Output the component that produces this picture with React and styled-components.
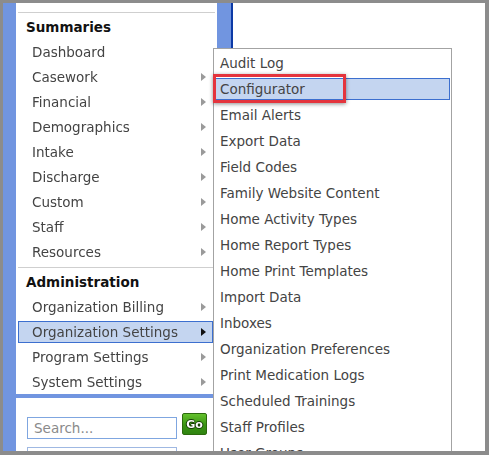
import React from 'react'
import styled, { createGlobalStyle } from 'styled-components'

const GlobalStyle = createGlobalStyle`
  html, body { margin: 0; padding: 0; background: #fff; }
  body { font-family: "DejaVu Sans", Verdana, sans-serif; }
`

const summaries = [
  { label: 'Dashboard' },
  { label: 'Casework', sub: true },
  { label: 'Financial', sub: true },
  { label: 'Demographics', sub: true },
  { label: 'Intake', sub: true },
  { label: 'Discharge', sub: true },
  { label: 'Custom', sub: true },
  { label: 'Staff', sub: true },
  { label: 'Resources', sub: true },
]

const administration = [
  { label: 'Organization Billing', sub: true },
  { label: 'Organization Settings', sub: true, active: true },
  { label: 'Program Settings', sub: true },
  { label: 'System Settings', sub: true },
]

const settings = [
  'Audit Log', 'Configurator', 'Email Alerts', 'Export Data', 'Field Codes',
  'Family Website Content', 'Home Activity Types', 'Home Report Types',
  'Home Print Templates', 'Import Data', 'Inboxes', 'Organization Preferences',
  'Print Medication Logs', 'Scheduled Trainings', 'Staff Profiles', 'User Groups',
]

export default function App() {
  return (
    <>
      <GlobalStyle />
      <Frame>
        <Sidebar>
          <MenuPanel>
            <Separator />
            <Heading>Summaries</Heading>
            {summaries.map((item) => (
              <MenuItem key={item.label} $active={item.active}>
                {item.label}
                {item.sub && <Arrow $active={item.active} />}
              </MenuItem>
            ))}
            <Separator $spaced />
            <Heading>Administration</Heading>
            {administration.map((item) => (
              <MenuItem key={item.label} $active={item.active}>
                {item.label}
                {item.sub && <Arrow $active={item.active} />}
              </MenuItem>
            ))}
          </MenuPanel>
          <SearchPanel>
            <SearchRow>
              <SearchInput placeholder="Search..." autoFocus />
              <GoButton>Go</GoButton>
            </SearchRow>
            <SelectBox />
          </SearchPanel>
        </Sidebar>
        <Main />
        <Submenu>
          {settings.map((label) => (
            <SubItem key={label} $active={label === 'Configurator'}>{label}</SubItem>
          ))}
          <Callout />
        </Submenu>
      </Frame>
    </>
  )
}

const Frame = styled.div`
  position: relative;
  box-sizing: border-box;
  width: 489px;
  height: 455px;
  border-style: solid;
  border-color: #8c8c8c;
  border-width: 3px 4px 4px 3px;
  display: flex;
  overflow: hidden;
  background: #fff;
`

const Sidebar = styled.div`
  box-sizing: border-box;
  width: 230px;
  height: 100%;
  background: #7195e0;
  border-right: 2px solid #0c3aa6;
  padding: 0 14px 0 13px;
  display: flex;
  flex-direction: column;
  gap: 4px;
`

const MenuPanel = styled.div`
  background: #fff;
  padding: 9px 0 1px;
  display: flex;
  flex-direction: column;
  gap: 3px;
`

const Separator = styled.div`
  height: 1px;
  margin: ${(p) => (p.$spaced ? '1px' : '0')} 2px 0;
  background: #cfcfcf;
`

const Heading = styled.div`
  height: 22px;
  line-height: 22px;
  padding-left: 10px;
  font-size: 13.5px;
  font-weight: bold;
  color: #111;
`

const MenuItem = styled.div`
  position: relative;
  box-sizing: border-box;
  height: 22px;
  margin: 0 4px 0 2px;
  padding-left: 13px;
  display: flex;
  align-items: center;
  justify-content: space-between;
  padding-right: 6px;
  font-size: 13.5px;
  color: #444;
  border: 1px solid ${(p) => (p.$active ? '#3c6fcf' : 'transparent')};
  background: ${(p) => (p.$active ? '#c4d5f0' : 'transparent')};
`

const Arrow = styled.span`
  width: 0;
  height: 0;
  border-top: 4px solid transparent;
  border-bottom: 4px solid transparent;
  border-left: 5px solid ${(p) => (p.$active ? '#111' : '#9a9a9a')};
`

const SearchPanel = styled.div`
  flex: 1;
  background: #fff;
  padding: 15px 0 0 11px;
  display: flex;
  flex-direction: column;
  gap: 8px;
`

const SearchRow = styled.div`
  display: flex;
  align-items: flex-start;
  gap: 5px;
`

const SearchInput = styled.input`
  box-sizing: border-box;
  width: 150px;
  height: 22px;
  margin-top: 4px;
  border: 1px solid #7fa6e0;
  padding: 0 6px;
  font-family: "DejaVu Sans", Verdana, sans-serif;
  font-size: 13.5px;
  color: #333;
  outline: none;
  &::placeholder { color: #8a8a8a; }
`

const GoButton = styled.div`
  box-sizing: border-box;
  width: 25px;
  height: 22px;
  display: flex;
  align-items: center;
  justify-content: center;
  border: 1px solid #2c6a0d;
  border-radius: 2px;
  background: linear-gradient(#63c12c, #3a9413 55%, #2f8410);
  color: #fff;
  font-size: 11px;
  font-weight: bold;
  text-shadow: -1px 0 #163c06, 1px 0 #163c06, 0 -1px #163c06, 0 1px #163c06;
`

const SelectBox = styled.div`
  box-sizing: border-box;
  width: 150px;
  height: 22px;
  border: 1px solid #9fb8e2;
`

const Main = styled.div`
  flex: 1;
  background: #fff;
`

const Submenu = styled.div`
  position: absolute;
  left: 210px;
  top: 45px;
  box-sizing: border-box;
  width: 239px;
  padding: 3px 1px;
  border: 1px solid #a3a3a3;
  background: #fff;
  display: flex;
  flex-direction: column;
  gap: 4px;
`

const SubItem = styled.div`
  box-sizing: border-box;
  height: 22px;
  line-height: 20px;
  padding-left: 4px;
  font-size: 13.5px;
  color: #444;
  white-space: nowrap;
  border: 1px solid ${(p) => (p.$active ? '#3c6fcf' : 'transparent')};
  background: ${(p) => (p.$active ? '#c4d5f0' : 'transparent')};
`

const Callout = styled.div`
  position: absolute;
  left: -1px;
  top: 25px;
  box-sizing: border-box;
  width: 133px;
  height: 29px;
  border: 3px solid #e4343d;
  box-shadow: 0 1px 4px rgba(0, 0, 0, 0.45);
`
